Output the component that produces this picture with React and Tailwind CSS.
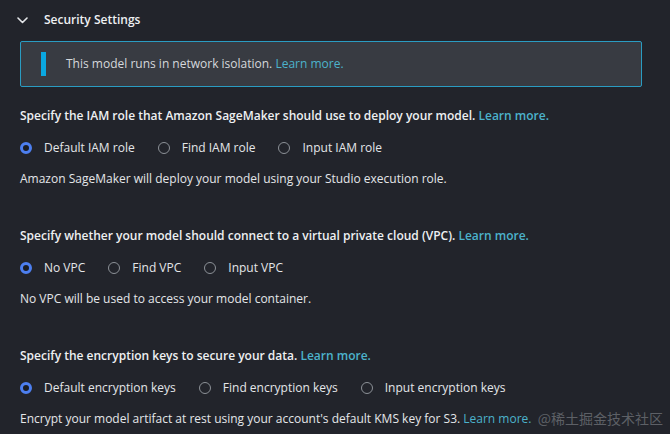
import React, { useState } from "react";

const font = { fontFamily: '"Open Sans", "Noto Sans", Arial, sans-serif' };

const sections = [
  {
    id: "iam",
    title: "Specify the IAM role that Amazon SageMaker should use to deploy your model.",
    options: ["Default IAM role", "Find IAM role", "Input IAM role"],
    help: "Amazon SageMaker will deploy your model using your Studio execution role.",
  },
  {
    id: "vpc",
    title: "Specify whether your model should connect to a virtual private cloud (VPC).",
    options: ["No VPC", "Find VPC", "Input VPC"],
    help: "No VPC will be used to access your model container.",
  },
  {
    id: "kms",
    title: "Specify the encryption keys to secure your data.",
    options: ["Default encryption keys", "Find encryption keys", "Input encryption keys"],
    help: "Encrypt your model artifact at rest using your account's default KMS key for S3.",
    helpLink: true,
  },
];

const Radio = ({ checked, label, onClick }) => (
  <button onClick={onClick} className="flex items-center gap-[12px] mr-[23px]">
    {checked ? (
      <span className="w-[12px] h-[12px] rounded-full border-[3px] border-[#4d7ff0] bg-[#1b1d22] box-border" />
    ) : (
      <span className="w-[12px] h-[12px] rounded-full border border-[#8c9197] box-border" />
    )}
    <span className="text-[12px] text-[#e4e6e9]">{label}</span>
  </button>
);

const Section = ({ section }) => {
  const [value, setValue] = useState(0);
  return (
    <div className="flex flex-col">
      <div className="text-[12px] font-semibold text-[#eef0f2] h-[18px] leading-[18px]">
        {section.title} <span className="text-[#4cb3cc]">Learn more.</span>
      </div>
      <div className="flex mt-[14px] h-[18px] items-center">
        {section.options.map((opt, i) => (
          <Radio key={opt} label={opt} checked={value === i} onClick={() => setValue(i)} />
        ))}
      </div>
      <div className="text-[12px] text-[#e4e6e9] mt-[13px] h-[18px] leading-[18px]">
        {section.help}
        {section.helpLink && <span className="text-[#4cb3cc]"> Learn more.</span>}
      </div>
    </div>
  );
};

export default function App() {
  return (
    <div className="relative w-[670px] h-[434px] bg-[#22242b] overflow-hidden" style={font}>
      <div className="flex items-center h-[18px] mt-[11px] pl-[17px]">
        <svg width="11" height="7" viewBox="0 0 11 7" fill="none">
          <path d="M1 1l4.5 4.5L10 1" stroke="#e4e6e9" strokeWidth="1.6" strokeLinecap="round" strokeLinejoin="round" />
        </svg>
        <span className="ml-[16px] text-[12px] font-semibold text-[#eef0f2]">Security Settings</span>
      </div>
      <div className="px-[20px] mt-[12px] w-[662px]">
        <div className="h-[46px] border border-[#2a9cc2] rounded-[2px] bg-[#383b42] flex items-center pl-[20px]">
          <span className="w-[5px] h-[24px] bg-[#0aa7e0]" />
          <span className="ml-[20px] text-[12px] text-[#d5d8dc]">
            This model runs in network isolation. <span className="text-[#4cb3cc]">Learn more.</span>
          </span>
        </div>
      </div>
      <div className="px-[20px] mt-[20px] flex flex-col gap-[39px]">
        {sections.map((s) => (
          <Section key={s.id} section={s} />
        ))}
      </div>
      {/* watermark */}
      <div
        className="absolute right-[7px] bottom-[5px] text-[14px] text-[#5d6066]"
        style={{ fontFamily: '"Noto Sans CJK SC", sans-serif' }}
      >
        @稀土掘金技术社区
      </div>
    </div>
  );
}
